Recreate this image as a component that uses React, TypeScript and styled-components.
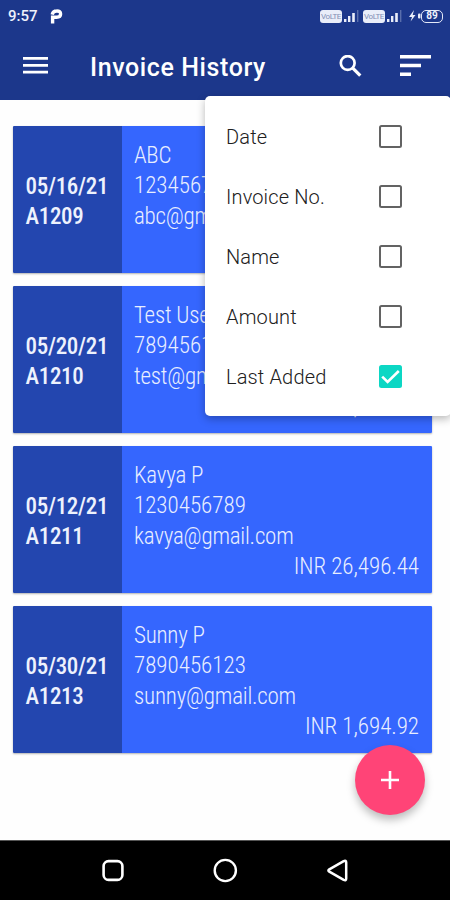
import React from 'react';
import styled, { createGlobalStyle } from 'styled-components';

const GlobalStyle = createGlobalStyle`
  * { box-sizing: border-box; }
  body { margin: 0; background: #fff; overflow: hidden; }
`;

const Screen = styled.div`
  position: relative;
  width: 450px;
  height: 900px;
  display: flex;
  flex-direction: column;
  overflow: hidden;
  background: #fefefe;
  font-family: Roboto, 'Liberation Sans', sans-serif;
`;

const StatusBar = styled.header`
  height: 32px;
  flex: none;
  display: flex;
  align-items: center;
  padding: 0 7px 0 8px;
  background: #1c378b;
  color: #eef1fb;
`;

const Clock = styled.span`
  width: 42px;
  font-size: 15px;
  font-weight: 500;
  line-height: 34px;
`;

const StatusIcons = styled.div`
  margin-left: auto;
  display: flex;
  align-items: center;
`;

const AppBar = styled.div`
  height: 68px;
  flex: none;
  display: flex;
  align-items: center;
  padding: 0 19px 0 23px;
  background: #1c378b;
  color: #fff;
`;

const Title = styled.h1`
  margin: 3px 0 0 42px;
  flex: 1;
  font-size: 25px;
  font-weight: 500;
  line-height: 30px;
  letter-spacing: 0.6px;
  white-space: nowrap;
`;

const IconButton = styled.button<{ $gap?: number }>`
  display: flex;
  padding: 0;
  margin: 0 0 0 ${(p) => p.$gap ?? 0}px;
  border: 0;
  background: none;
  color: inherit;
`;

const List = styled.main`
  flex: 1;
  display: flex;
  flex-direction: column;
  gap: 13px;
  padding: 26px 18px 0 13px;
`;

const Card = styled.article`
  height: 147px;
  display: flex;
  box-shadow: 0 1px 2px rgba(0, 0, 0, 0.3);
  border-radius: 1px;
  overflow: hidden;
`;

const Stamp = styled.div`
  width: 109px;
  flex: none;
  padding: 45.5px 0 0 12.5px;
  background: #2346af;
  color: #eef2fd;
`;

const Details = styled.div`
  flex: 1;
  padding: 14.5px 13px 0 12px;
  background: #3566fe;
  color: #e8eeff;
`;

const Line = styled.div<{ $weight: number; $tracking: number; $right?: boolean }>`
  height: 30.6px;
  font-size: 23px;
  line-height: 30.6px;
  font-weight: ${(p) => p.$weight};
  font-stretch: 75%;
  letter-spacing: ${(p) => p.$tracking}px;
  white-space: nowrap;
  text-align: ${(p) => (p.$right ? 'right' : 'left')};
`;

const Menu = styled.div`
  position: absolute;
  left: 205px;
  top: 96px;
  width: 246px;
  height: 320px;
  padding: 10px 0;
  border-radius: 5px;
  background: #fff;
  box-shadow: 0 3px 9px rgba(0, 0, 0, 0.28);
`;

const MenuItem = styled.label`
  height: 60px;
  display: flex;
  align-items: center;
  justify-content: space-between;
  padding: 0 49px 0 21px;
  color: #202020;
  font-size: 20px;
  font-weight: 350;
  letter-spacing: 0.15px;
`;

const Caption = styled.span`
  margin-top: 2px;
`;

const Box = styled.span<{ $checked: boolean }>`
  width: 23px;
  height: 23px;
  display: flex;
  border: ${(p) => (p.$checked ? '0' : '2px solid #636363')};
  border-radius: 2.5px;
  background: ${(p) => (p.$checked ? '#0cd7c4' : '#fff')};
`;

const Fab = styled.button`
  position: absolute;
  left: 355.4px;
  top: 745px;
  width: 70px;
  height: 70px;
  display: flex;
  align-items: center;
  justify-content: center;
  padding: 0;
  border: 0;
  border-radius: 50%;
  background: #ff4477;
  box-shadow: 0 5px 9px rgba(0, 0, 0, 0.26);
`;

const NavBar = styled.nav`
  height: 60px;
  flex: none;
  display: flex;
  align-items: center;
  justify-content: space-between;
  padding: 0 99px;
  background: #000;
  border-top: 1px solid #555;
`;

const VolteTag = styled.span`
  width: 22px;
  height: 13px;
  display: flex;
  align-items: center;
  justify-content: center;
  border-radius: 3px;
  background: #e9edf9;
  color: #8390b5;
  font-size: 8px;
  line-height: 13px;
  letter-spacing: -0.4px;
`;

const Battery = styled.span`
  width: 22px;
  height: 13px;
  display: flex;
  align-items: center;
  justify-content: center;
  border: 1.5px solid #e4e9f8;
  border-radius: 5px;
  font-size: 10px;
  font-weight: 700;
  line-height: 10px;
`;

const SignalIcon = () => (
  <svg width="21" height="14" viewBox="0 0 21 14" fill="#e9edf9">
    <rect x="2" y="10" width="2.4" height="3" />
    <rect x="6" y="7" width="2.4" height="6" />
    <rect x="10.2" y="4" width="2.6" height="9" />
    <rect x="15" y="1" width="1.4" height="12" opacity=".3" />
  </svg>
);

const invoices = [
  { date: '05/16/21', no: 'A1209', name: 'ABC', phone: '1234567890', email: 'abc@gmail.com', amount: '' },
  { date: '05/20/21', no: 'A1210', name: 'Test User', phone: '7894561230', email: 'test@gmail.com', amount: 'INR 10,000.00' },
  { date: '05/12/21', no: 'A1211', name: 'Kavya P', phone: '1230456789', email: 'kavya@gmail.com', amount: 'INR 26,496.44' },
  { date: '05/30/21', no: 'A1213', name: 'Sunny P', phone: '7890456123', email: 'sunny@gmail.com', amount: 'INR 1,694.92' },
];

const sortOptions = ['Date', 'Invoice No.', 'Name', 'Amount', 'Last Added'];

export default function App() {
  return (
    <Screen>
      <GlobalStyle />
      <StatusBar>
        <Clock>9:57</Clock>
        <svg width="13" height="15" viewBox="0 0 13 15">
          <path d="M2.6 14.5V8.2H6.6Q10.6 8.2 10.6 5T6.6 2Q3 2 2.2 5.6" fill="none" stroke="#fff" strokeWidth="3.4" />
        </svg>
        <StatusIcons>
          <VolteTag>VoLTE</VolteTag>
          <SignalIcon />
          <VolteTag>VoLTE</VolteTag>
          <SignalIcon />
          <svg width="15" height="14" viewBox="-3 0 15 14" fill="#e9edf9">
            <path d="M5 1L0 8h3L1.6 12.5 6.5 6H3.7z" />
            <rect x="9" y="4.5" width="2.5" height="5" rx="1" />
          </svg>
          <Battery>89</Battery>
        </StatusIcons>
      </StatusBar>
      <AppBar>
        <IconButton aria-label="Open navigation">
          <svg width="25" height="18" viewBox="0 0 25 18" fill="currentColor">
            <path d="M0 0h25v2.8H0zM0 6.9h25v2.8H0zM0 13.8h25v2.8H0z" />
          </svg>
        </IconButton>
        <Title>Invoice History</Title>
        <IconButton aria-label="Search">
          <svg width="23" height="23" viewBox="0 0 23 23" fill="none" stroke="currentColor">
            <circle cx="8.7" cy="8" r="6.9" strokeWidth="2.7" />
            <path d="M13.8 13.1L21.3 20.6" strokeWidth="3.3" />
          </svg>
        </IconButton>
        <IconButton $gap={38} aria-label="Sort">
          <svg width="31" height="22" viewBox="0 0 31 22" fill="currentColor">
            <path d="M0 0h31v3.6H0zM0 8.7h21v3.6H0zM0 17.4h11v3.6H0z" />
          </svg>
        </IconButton>
      </AppBar>
      <List>
        {invoices.map((inv) => (
          <Card key={inv.no}>
            <Stamp>
              <Line $weight={500} $tracking={-0.3}>{inv.date}</Line>
              <Line $weight={500} $tracking={-0.3}>{inv.no}</Line>
            </Stamp>
            <Details>
              <Line $weight={330} $tracking={-0.25}>{inv.name}</Line>
              <Line $weight={330} $tracking={0}>{inv.phone}</Line>
              <Line $weight={330} $tracking={-0.22}>{inv.email}</Line>
              <Line $weight={330} $tracking={-0.05} $right>{inv.amount}</Line>
            </Details>
          </Card>
        ))}
      </List>
      <NavBar>
        <svg width="28" height="28" viewBox="0 0 28 28" fill="none" stroke="#fff" strokeWidth="2.6">
          <rect x="4.6" y="4.1" width="18.8" height="18.8" rx="5" />
        </svg>
        <svg width="28" height="28" viewBox="0 0 28 28" fill="none" stroke="#fff" strokeWidth="2.4">
          <circle cx="14.3" cy="13.5" r="10.6" />
        </svg>
        <svg width="28" height="28" viewBox="0 0 28 28" fill="none" stroke="#fff" strokeWidth="2.5" strokeLinejoin="round">
          <path d="M20.7 4.1Q23.2 3 23.2 5.5V21.5Q23.2 24 20.7 22.9L6.3 14.7Q4.5 13.5 6.3 12.3Z" />
        </svg>
      </NavBar>
      <Menu>
        {sortOptions.map((label) => (
          <MenuItem key={label}>
            <Caption>{label}</Caption>
            <Box $checked={label === 'Last Added'}>
              {label === 'Last Added' && (
                <svg width="23" height="23" viewBox="0 0 23 23" fill="none" stroke="#fff" strokeWidth="2.6">
                  <path d="M3.2 11.6L8.6 17L19.8 6" />
                </svg>
              )}
            </Box>
          </MenuItem>
        ))}
      </Menu>
      <Fab aria-label="Add invoice">
        <svg width="20" height="20" viewBox="0 0 20 20" stroke="#fff" strokeWidth="2.6">
          <path d="M10 1V19M1 10H19" />
        </svg>
      </Fab>
    </Screen>
  );
}
